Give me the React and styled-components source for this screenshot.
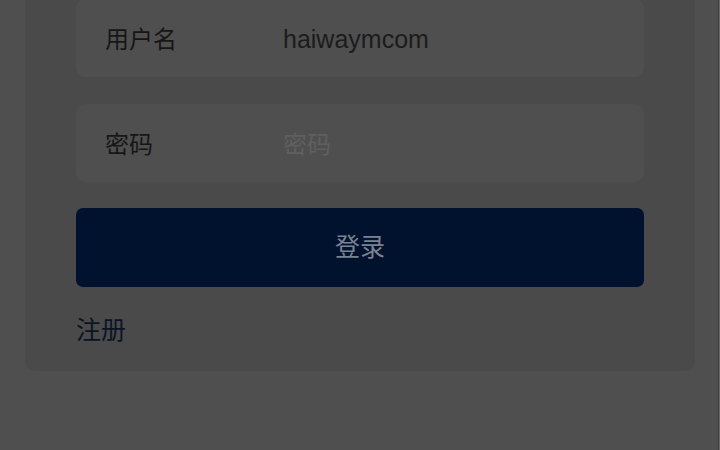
import React from "react";
import styled, { createGlobalStyle } from "styled-components";

const Global = createGlobalStyle`
  html, body { margin: 0; padding: 0; background: #4f4f4f; overflow: hidden; }
  body { font-family: "Liberation Sans", "Noto Sans CJK SC", sans-serif; }
`;

const Page = styled.div`
  width: 720px;
  height: 450px;
  display: flex;
  background: #4f4f4f;
  overflow: hidden;
`;

const Main = styled.div`
  flex: 1;
  padding: 0 23px 0 25px;
`;

const Edge = styled.div`
  width: 2px;
  display: flex;
  &::before { content: ""; width: 1px; background: #3f3f3f; }
  &::after { content: ""; width: 1px; background: #6a6a6a; }
`;

const Card = styled.div`
  margin-top: -40px;
  background: #4a4a4a;
  border-radius: 10px;
  padding: 39px 51px 30px;
  display: flex;
  flex-direction: column;
`;

const Field = styled.div`
  height: 78px;
  background: #4f4f4f;
  border-radius: 9px;
  display: flex;
  align-items: center;
  padding: 0 29px;
  margin-bottom: ${(p) => p.$gap}px;
`;

const Label = styled.span`
  width: 178px;
  font-family: "Noto Sans CJK SC", sans-serif;
  font-size: 24px;
  line-height: 1;
  color: #161616;
`;

const Value = styled.span`
  font-family: ${(p) => (p.$placeholder ? '"Noto Sans CJK SC", sans-serif' : '"Liberation Sans", sans-serif')};
  font-size: ${(p) => (p.$placeholder ? 24 : 25)}px;
  line-height: 1;
  padding-top: ${(p) => (p.$placeholder ? 0 : 3)}px;
  color: ${(p) => (p.$placeholder ? "#5f5f5f" : "#1c1c1c")};
`;

const Button = styled.button`
  height: 79px;
  border: none;
  border-radius: 7px;
  background: #00122d;
  color: #7c8290;
  font-family: "Noto Sans CJK SC", sans-serif;
  font-size: 25px;
  line-height: 1;
  padding: 0 0 4px;
  display: flex;
  align-items: center;
  justify-content: center;
`;

const Link = styled.a`
  margin-top: 28px;
  font-family: "Noto Sans CJK SC", sans-serif;
  font-size: 25px;
  line-height: 26px;
  color: #0b1426;
`;

export default function App() {
  return (
    <>
      <Global />
      <Page>
        <Main>
          <Card>
            <Field $gap={27}>
              <Label>用户名</Label>
              <Value>haiwaymcom</Value>
            </Field>
            <Field $gap={26}>
              <Label>密码</Label>
              <Value $placeholder>密码</Value>
            </Field>
            <Button>登录</Button>
            <Link>注册</Link>
          </Card>
        </Main>
        <Edge />
      </Page>
    </>
  );
}
